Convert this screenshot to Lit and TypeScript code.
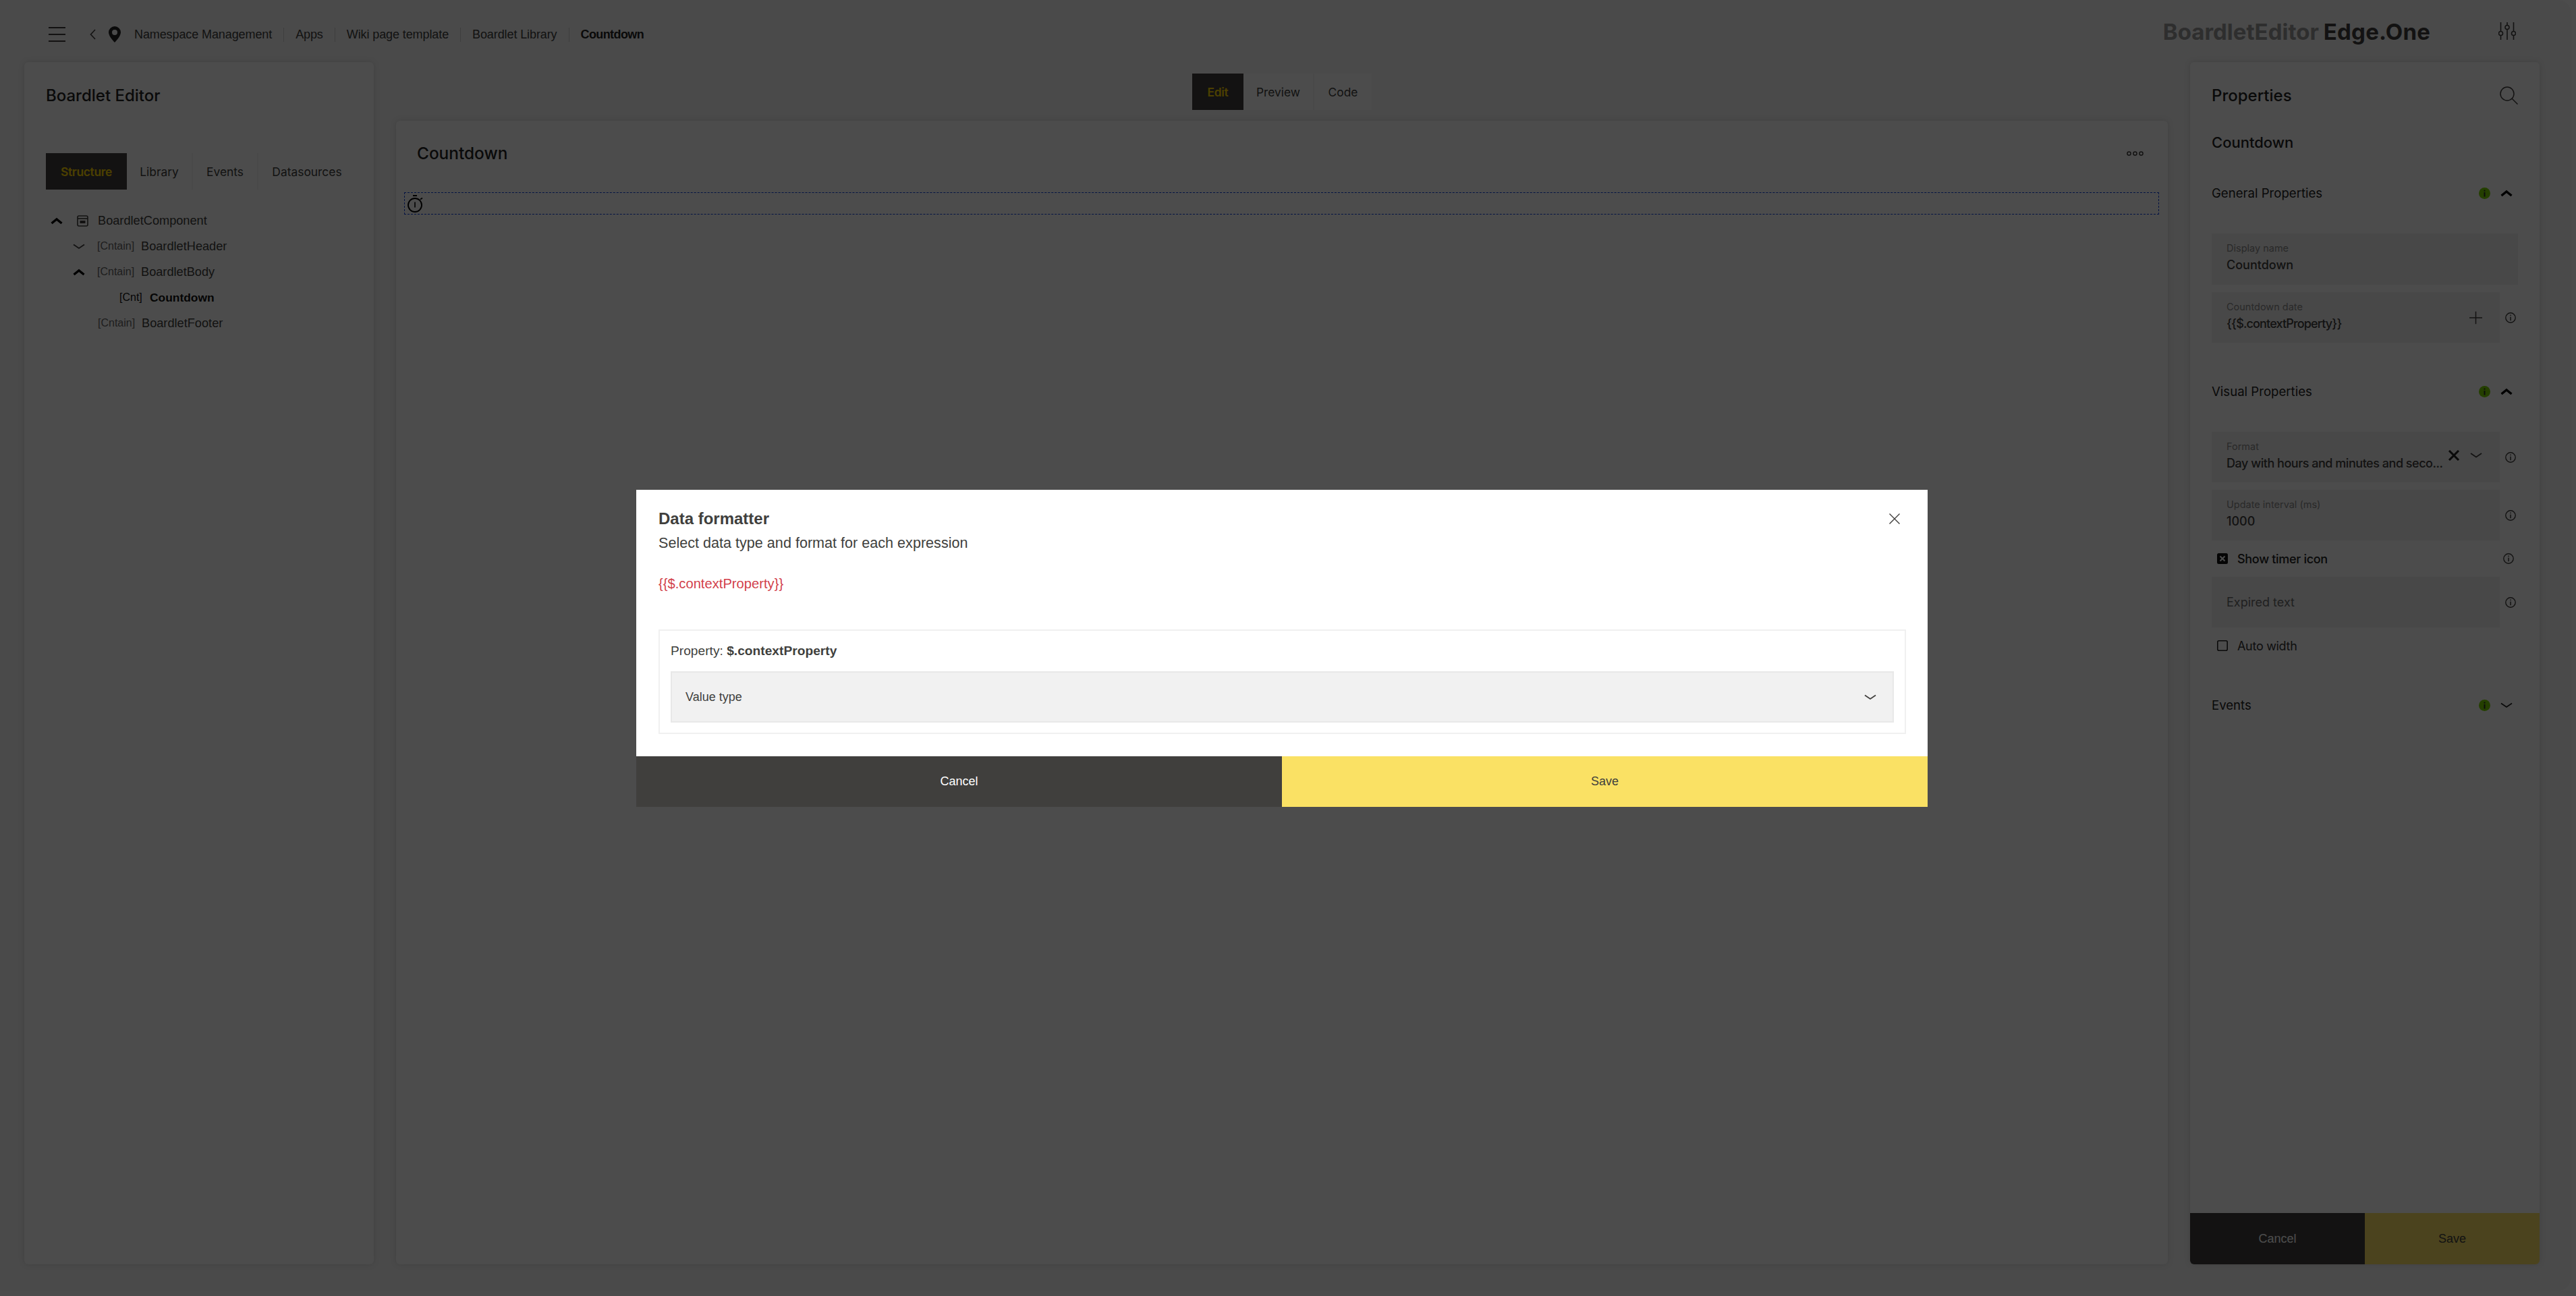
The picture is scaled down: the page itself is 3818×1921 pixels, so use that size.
import { LitElement, html, css, svg } from "lit";
import { customElement } from "lit/decorators.js";

const chevDown = (cls = "") => html`<svg class="ico ${cls}" viewBox="0 0 18 9" width="18" height="9"><path d="M1 1.5 L9 7 L17 1.5" fill="none" stroke="currentColor" stroke-width="1.8"/></svg>`;
const chevUp = () => html`<svg class="ico bold" viewBox="0 0 18 11" width="18" height="11"><path d="M1.5 9 L9 3 L16.5 9" fill="none" stroke="#000" stroke-width="3.4"/></svg>`;
const info = () => html`<svg class="ico info" viewBox="0 0 16 16" width="16" height="16"><circle cx="8" cy="8" r="7.2" fill="none" stroke="currentColor" stroke-width="1.4"/><rect x="7.3" y="6.6" width="1.5" height="5.6" fill="currentColor"/><rect x="7.3" y="3.6" width="1.5" height="1.5" fill="currentColor"/></svg>`;
const dot = () => html`<svg class="ico" viewBox="0 0 17 17" width="17" height="17"><circle cx="8.5" cy="8.5" r="8.5" fill="#7ad400"/><rect x="7.5" y="7" width="2" height="6.5" fill="#2a2a2a"/><rect x="7.5" y="3.6" width="2" height="2" fill="#2a2a2a"/></svg>`;

@customElement("app-root")
export class AppRoot extends LitElement {
  static styles = css`
    :host { display: block; height: 100vh; background: #fff; font-family: Inter, "Liberation Sans", sans-serif; color: #403f3d; overflow: hidden; position: relative; }
    * { box-sizing: border-box; }
    .ico { display: block; flex: none; }
    .page { height: 1913px; width: 3811px; background: #f7f7f7; border-radius: 0 20px 20px 0; display: flex; flex-direction: column; }
    .top { height: 92px; flex: none; display: flex; align-items: center; padding: 10px 82px 0 72px; }
    .back { margin-left: 36px; }
    .pin { margin-left: 19px; margin-right: 20px; }
    .crumb { font-size: 18px; letter-spacing: -.1px; padding-right: 17px; margin-right: 17px; border-right: 1px solid #cfcfcf; line-height: 21px; font-family: "Liberation Sans", sans-serif; }
    .crumb.cur { border: 0; font-weight: 700; color: #222; margin: 0; padding: 0; letter-spacing: -.6px; }
    .logo { margin-left: auto; display: flex; gap: 7px; font-size: 33px; font-weight: 700; margin-top: -8px; }
    .logo .a { color: #999; }
    .logo .b { color: #403f3d; letter-spacing: .2px; }
    .sliders { margin-left: 101px; margin-top: -10px; }
    .cols { flex: 1; display: flex; gap: 33px; padding: 0 0 39px 36px; min-height: 0; }
    .panel { background: #fff; border-radius: 6px; box-shadow: 0 0 10px rgba(0,0,0,.13); display: flex; flex-direction: column; }
    .side { width: 518px; flex: none; }
    .middle { width: 2626px; flex: none; display: flex; flex-direction: column; align-items: center; }
    .mode { display: flex; margin-top: 17px; height: 54px; }
    .mode div, .ltabs div { display: flex; align-items: center; justify-content: center; background: #fff; font-size: 17.4px; }
    .mode .on, .ltabs .on { background: #403f3d; color: #ffd500; font-weight: 600; letter-spacing: -.3px; }
    .m1 { width: 76px; }
    .m2 { width: 105px; border-right: 2px solid #f3f3f3; }
    .m3 { width: 85px; }
    .canvas { align-self: stretch; flex: 1; margin-top: 16px; }
    .chead { height: 96px; display: flex; align-items: center; justify-content: space-between; padding: 0 36px 0 31px; flex: none; }
    .h-title { font-size: 24px; font-weight: 500; color: #222; }
    .canvas .h-title { font-size: 24.4px; }
    .dash { margin: 10px 13px 0 12px; height: 33px; border: 1px dashed #0a40e0; padding: 3px 0 0 4px; }
    .phead { height: 98px; padding: 0 32px; flex: none; display: flex; align-items: center; justify-content: space-between; }
    .ltabs { display: flex; height: 54px; margin: 37px 0 0 32px; flex: none; }
    .t1 { width: 120px; }
    .t2 { width: 98px; border-right: 2px solid #f3f3f3; }
    .t3 { width: 97px; border-right: 2px solid #f3f3f3; }
    .t4 { width: 144px; }
    .tree { margin-top: 27px; }
    .row { height: 38px; display: flex; align-items: center; font-size: 18.2px; font-family: "Liberation Sans", sans-serif; }
    .row.l0 { padding-left: 39px; }
    .row.l1 { padding-left: 72px; }
    .row.l2 { padding-left: 141px; color: #111; }
    .row.nc { padding-left: 109px; }
    .slot { width: 36px; flex: none; display: flex; }
    .slot0 { width: 39px; }
    .tag { width: 65px; font-size: 16px; color: #666; flex: none; }
    .l2 .tag { width: 45px; color: #111; }
    .l2 .nm { font-weight: 700; font-size: 17.4px; }
    .tico { margin-right: 14px; }
    .pname { height: 42px; padding: 0 32px; font-size: 22px; font-weight: 500; color: #222; display: flex; align-items: center; flex: none; }
    .sec { height: 40px; margin: 0 32px; display: flex; align-items: center; font-size: 18.6px; color: #222; flex: none; }
    .sec .dot { margin-left: auto; margin-right: 15px; }
    .sec .cv { width: 18px; margin-right: 8px; display: flex; justify-content: center; }
    .s1 { margin-top: 34px; }
    .s2 { margin-top: 52px; }
    .s3 { margin-top: 41px; }
    .frow { display: flex; align-items: center; padding: 0 32px; flex: none; }
    .frow .info { margin-left: 8px; color: #403f3d; }
    .field { width: 427px; height: 75px; background: #f1f1f1; padding: 11px 22px 0; display: flex; flex-direction: column; position: relative; flex: none; }
    .field.full { width: 454px; height: 76px; }
    .field.empty { justify-content: center; padding-top: 0; }
    .lab { font-size: 14.5px; color: #8a8a8a; line-height: 22px; }
    .val { font-size: 18px; font-weight: 500; line-height: 24px; color: #403f3d; white-space: nowrap; margin-top: 2px; }
    .val.expr { letter-spacing: -.85px; }
    .val.fmt { letter-spacing: -.47px; }
    .ph { font-size: 18px; color: #6c6c6c; }
    .fields1 { margin-top: 40px; }
    .gap { margin-top: 11px; }
    .fact { position: absolute; top: 50%; transform: translateY(-50%); display: flex; align-items: center; }
    .plus { right: 26px; }
    .xmark { right: 59px; top: 46%; }
    .dn { right: 26px; top: 46%; }
    .chk { height: 54px; font-size: 18px; letter-spacing: -.3px; }
    .chk .box { margin-left: 8px; margin-right: 14px; }
    .chk .info { margin-left: auto; margin-right: 3px; }
    .chk.sel { font-weight: 500; color: #222; }
    .chk.un { color: #333; }
    .pfoot { margin-top: auto; display: flex; height: 76px; flex: none; }
    .btn { flex: 1; display: flex; align-items: center; justify-content: center; font-size: 18px; font-family: "Liberation Sans", sans-serif; }
    .btn.c { background: #403f3d; color: #fff; }
    .btn.s { background: #fae164; color: #403f3d; }
    .pfoot .c { border-bottom-left-radius: 6px; }
    .pfoot .s { border-bottom-right-radius: 6px; }
    .overlay { position: absolute; inset: 0; background: rgba(0,0,0,.7); }
    .modal { position: absolute; left: 943px; top: 726px; width: 1914px; height: 470px; background: #fff; display: flex; flex-direction: column; font-family: "Liberation Sans", sans-serif; }
    .mbody { flex: 1; padding: 29px 32px 0 33px; position: relative; }
    .close { position: absolute; top: 35px; right: 41px; }
    .mt { font-size: 24px; font-weight: 700; line-height: 27px; }
    .ms { font-size: 21.6px; line-height: 24px; margin-top: 11px; }
    .red { font-size: 20.2px; line-height: 24px; color: #d23f4b; margin-top: 36px; }
    .pbox { margin-top: 56px; height: 155px; border: 2px solid #f0f0f0; padding: 0 16px; }
    .pl { font-size: 19.2px; line-height: 24px; margin-top: 18px; }
    .select { height: 76px; background: #f1f1f1; border: 2px solid #e8e8e8; display: flex; align-items: center; justify-content: space-between; padding: 0 24px 0 20px; font-size: 18px; margin-top: 18px; }
    .mfoot { display: flex; height: 75px; flex: none; }
  `;

  render() {
    const hamb = svg`<path d="M0 1h25M0 11h25M0 21h25" stroke="#403f3d" stroke-width="2"/>`;
    return html`
      <div class="page">
        <div class="top">
          <svg class="ico" viewBox="0 0 25 22" width="25" height="22">${hamb}</svg>
          <svg class="ico back" viewBox="0 0 9 16" width="9" height="16"><path d="M8 1 L1.5 8 L8 15" fill="none" stroke="#403f3d" stroke-width="1.6"/></svg>
          <svg class="ico pin" viewBox="0 0 18 24" width="18" height="24"><path fill-rule="evenodd" d="M9 0a9 9 0 0 1 9 9c0 6-9 15-9 15S0 15 0 9a9 9 0 0 1 9-9zm0 5a4 4 0 1 0 0 8 4 4 0 0 0 0-8z" fill="#222"/></svg>
          <span class="crumb">Namespace Management</span>
          <span class="crumb">Apps</span>
          <span class="crumb">Wiki page template</span>
          <span class="crumb">Boardlet Library</span>
          <span class="crumb cur">Countdown</span>
          <div class="logo"><span class="a">BoardletEditor</span><span class="b">Edge.One</span></div>
          <svg class="ico sliders" viewBox="0 0 26 26" width="26" height="26" fill="none" stroke="#403f3d" stroke-width="1.6"><path d="M3.5 0v13M3.5 20v6M13 0v4M13 11v15M22.5 0v13M22.5 20v6"/><circle cx="3.5" cy="16.5" r="3"/><circle cx="13" cy="7.5" r="3"/><circle cx="22.5" cy="16.5" r="3"/></svg>
        </div>
        <div class="cols">
          <div class="panel side">
            <div class="phead"><div class="h-title">Boardlet Editor</div></div>
            <div class="ltabs"><div class="t1 on">Structure</div><div class="t2">Library</div><div class="t3">Events</div><div class="t4">Datasources</div></div>
            <div class="tree">
              <div class="row l0"><span class="slot slot0">${chevUp()}</span><svg class="ico tico" viewBox="0 0 17 17" width="17" height="17" fill="none" stroke="#403f3d" stroke-width="1.6"><rect x="1" y="1" width="15" height="15" rx="2"/><path d="M1 5h15"/><rect x="4.5" y="8" width="8" height="4" fill="#403f3d" stroke="none"/></svg><span>BoardletComponent</span></div>
              <div class="row l1"><span class="slot">${chevDown()}</span><span class="tag">[Cntain]</span><span>BoardletHeader</span></div>
              <div class="row l1"><span class="slot">${chevUp()}</span><span class="tag">[Cntain]</span><span>BoardletBody</span></div>
              <div class="row l2"><span class="tag">[Cnt]</span><span class="nm">Countdown</span></div>
              <div class="row nc"><span class="tag">[Cntain]</span><span>BoardletFooter</span></div>
            </div>
          </div>
          <div class="middle">
            <div class="mode"><div class="m1 on">Edit</div><div class="m2">Preview</div><div class="m3">Code</div></div>
            <div class="panel canvas">
              <div class="chead"><div class="h-title">Countdown</div>
                <svg class="ico" viewBox="0 0 25 7" width="25" height="7" fill="none" stroke="#403f3d" stroke-width="1.5"><circle cx="3.5" cy="3.5" r="2.6"/><circle cx="12.5" cy="3.5" r="2.6"/><circle cx="21.5" cy="3.5" r="2.6"/></svg>
              </div>
              <div class="dash"><svg class="ico" viewBox="0 0 23 26" width="23" height="26" fill="none" stroke="#000" stroke-width="1.9"><path d="M8 1h6" stroke-width="2"/><circle cx="11" cy="15" r="10"/><path d="M11 10.5v8" stroke-width="1.6"/><path d="M19 6.5l3-2" stroke-width="1.6"/></svg></div>
            </div>
          </div>
          <div class="panel side">
            <div class="phead"><div class="h-title">Properties</div>
              <svg class="ico" viewBox="0 0 27 27" width="27" height="27" fill="none" stroke="#403f3d" stroke-width="1.5"><circle cx="11" cy="11" r="10"/><path d="M18 18l8.5 8.5"/></svg></div>
            <div class="pname">Countdown</div>
            <div class="sec s1">General Properties<span class="dot">${dot()}</span><span class="cv">${chevUp()}</span></div>
            <div class="frow fields1"><div class="field full"><span class="lab">Display name</span><span class="val">Countdown</span></div></div>
            <div class="frow gap"><div class="field"><span class="lab">Countdown date</span><span class="val expr">{{$.contextProperty}}</span>
              <svg class="ico fact plus" viewBox="0 0 19 19" width="19" height="19"><path d="M9.5 0v19M0 9.5h19" stroke="#403f3d" stroke-width="1.5"/></svg></div>${info()}</div>
            <div class="sec s2">Visual Properties<span class="dot">${dot()}</span><span class="cv">${chevUp()}</span></div>
            <div class="frow fields1"><div class="field"><span class="lab">Format</span><span class="val fmt">Day with hours and minutes and seco...</span>
              <svg class="ico fact xmark" viewBox="0 0 18 16" width="18" height="16"><path d="M2 1l14 14M16 1L2 15" stroke="#222" stroke-width="3"/></svg>
              <span class="fact dn">${chevDown()}</span></div>${info()}</div>
            <div class="frow gap"><div class="field"><span class="lab">Update interval (ms)</span><span class="val">1000</span></div>${info()}</div>
            <div class="frow chk sel"><svg class="ico box" viewBox="0 0 16 16" width="16" height="16"><rect width="16" height="16" rx="2.5" fill="#111"/><path d="M4.5 4.5l7 7M11.5 4.5l-7 7" stroke="#fff" stroke-width="2.2"/></svg>Show timer icon<span class="info">${info()}</span></div>
            <div class="frow"><div class="field empty"><span class="ph">Expired text</span></div>${info()}</div>
            <div class="frow chk un"><svg class="ico box" viewBox="0 0 16 16" width="16" height="16"><rect x=".8" y=".8" width="14.4" height="14.4" rx="2" fill="none" stroke="#222" stroke-width="1.6"/></svg>Auto width</div>
            <div class="sec s3">Events<span class="dot">${dot()}</span><span class="cv">${chevDown()}</span></div>
            <div class="pfoot"><div class="btn c">Cancel</div><div class="btn s">Save</div></div>
          </div>
        </div>
      </div>
      <div class="overlay"></div>
      <div class="modal">
        <div class="mbody">
          <svg class="ico close" viewBox="0 0 16 16" width="16" height="16"><path d="M.5.5l15 15M15.5.5l-15 15" stroke="#403f3d" stroke-width="1.4"/></svg>
          <div class="mt">Data formatter</div>
          <div class="ms">Select data type and format for each expression</div>
          <div class="red">{{$.contextProperty}}</div>
          <div class="pbox">
            <div class="pl">Property: <b>$.contextProperty</b></div>
            <div class="select"><span>Value type</span>${chevDown()}</div>
          </div>
        </div>
        <div class="mfoot"><div class="btn c">Cancel</div><div class="btn s">Save</div></div>
      </div>
    `;
  }
}
